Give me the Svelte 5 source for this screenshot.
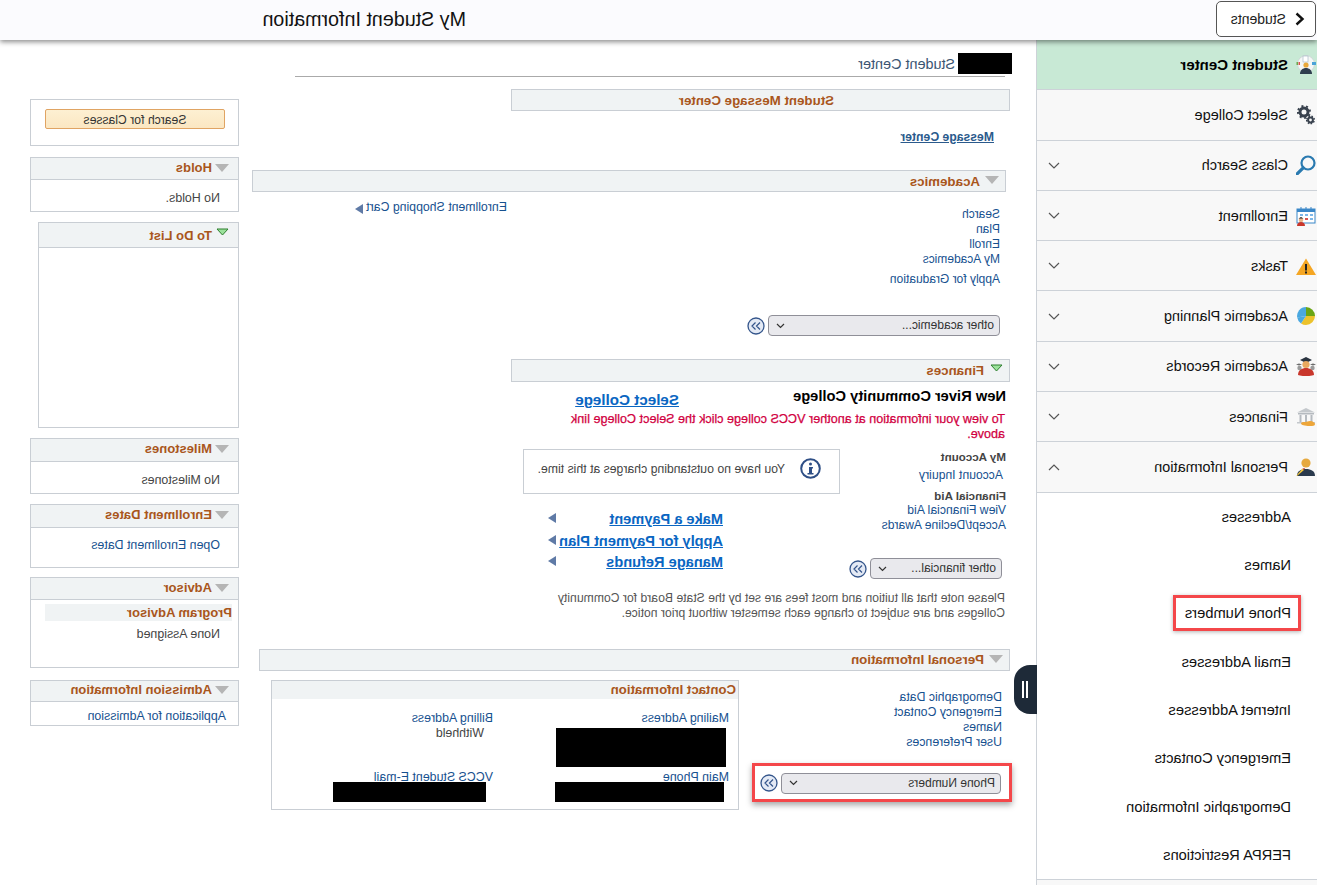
<script>
  const nav = [
    { t: 'Student Center', i: 'center', active: true },
    { t: 'Select College', i: 'gears' },
    { t: 'Class Search', i: 'search', c: 'down' },
    { t: 'Enrollment', i: 'cal', c: 'down' },
    { t: 'Tasks', i: 'warn', c: 'down' },
    { t: 'Academic Planning', i: 'pie', c: 'down' },
    { t: 'Academic Records', i: 'grad', c: 'down' },
    { t: 'Finances', i: 'bank', c: 'down' },
    { t: 'Personal Information', i: 'person', c: 'up' }
  ];
  const sub = ['Addresses', 'Names', 'Phone Numbers', 'Email Addresses', 'Internet Addresses', 'Emergency Contacts', 'Demographic Information', 'FERPA Restrictions'];
</script>

{#snippet tri(kind)}
  <svg class="tri" width="14" height="9" viewBox="0 0 14 9">
    {#if kind === 'green'}
      <path d="M1 1h11L6.500 7z" fill="#9be29b" stroke="#2f7f2f" stroke-width="1" />
    {:else}
      <path d="M0 1h14L7 9z" fill="#b5b5b5" />
    {/if}
  </svg>
{/snippet}

{#snippet arrow()}
  <svg class="arrow" width="8" height="10" viewBox="0 0 8 10"><path d="M0 0l8 5-8 5z" fill="#5f7aa6" /></svg>
{/snippet}

{#snippet go()}
  <svg class="go" width="18" height="18" viewBox="0 0 18 18">
    <circle cx="9" cy="9" r="8" fill="#e4eaf5" stroke="#34558b" stroke-width="1.300" />
    <path d="M5 5.500L8.500 9 5 12.500M9.500 5.500L13 9l-3.500 3.500" fill="none" stroke="#34558b" stroke-width="1.200" />
  </svg>
{/snippet}

{#snippet dropdown(label, w)}
  <div class="pick">
    <div class="select" style="width:{w}px">
      <span>{label}</span>
      <svg width="9" height="6" viewBox="0 0 9 6"><path d="M1 1l3.500 3.500L8 1" fill="none" stroke="#333" stroke-width="1.200" /></svg>
    </div>
    {@render go()}
  </div>
{/snippet}

{#snippet icon(k)}
  <svg class="ico" width="20" height="20" viewBox="0 0 20 20">
    {#if k === 'center'}
      <circle cx="10" cy="9" r="8.500" fill="#f4f7f6" stroke="#cfd8d8" />
      <rect x="8" y="1" width="5" height="6" fill="#fff" stroke="#9fb3c0" stroke-width=".6" />
      <rect x="0" y="7" width="4" height="3" fill="#4aa3d8" />
      <rect x="16" y="7" width="1.500" height="3" fill="#d9534f" />
      <rect x="18" y="7" width="1.500" height="3" fill="#6aa84f" />
      <circle cx="10" cy="10" r="2.600" fill="#e9a93a" />
      <path d="M4 19c0-4 3-6 6-6s6 2 6 6z" fill="#2f3e4e" />
    {:else if k === 'gears'}
      <circle cx="12" cy="7" r="4" fill="none" stroke="#39424e" stroke-width="3" />
      <circle cx="12" cy="7" r="6" fill="none" stroke="#39424e" stroke-width="2" stroke-dasharray="2 2.700" />
      <circle cx="5.500" cy="15" r="2.400" fill="none" stroke="#39424e" stroke-width="2" />
      <circle cx="5.500" cy="15" r="3.800" fill="none" stroke="#39424e" stroke-width="1.500" stroke-dasharray="1.500 1.500" />
    {:else if k === 'search'}
      <circle cx="8" cy="8" r="6.500" fill="none" stroke="#2a7ab0" stroke-width="2.200" />
      <path d="M12.800 12.800L19 19" stroke="#2a7ab0" stroke-width="3.200" stroke-linecap="round" />
    {:else if k === 'cal'}
      <rect x="1" y="3" width="18" height="14" fill="#fff" stroke="#3a87c8" />
      <rect x="1" y="3" width="18" height="3" fill="#3a87c8" />
      <path d="M5 1v4M10 1v4M15 1v4" stroke="#3a87c8" stroke-width="1" />
      <path d="M3 8h3v2H3zM8 8h3v2H8zM13 8h3v2h-3zM3 12h3v2H3z" fill="#7db7e8" />
      <path d="M8 12h3v2H8z" fill="#d9534f" />
      <circle cx="15" cy="14" r="2.300" fill="#e9b48a" />
      <path d="M12.500 12.500h5l-2.500-1.500z" fill="#222" />
      <path d="M11 20c0-3 2-4 4-4s4 1 4 4z" fill="#c9372c" />
    {:else if k === 'warn'}
      <path d="M10 2.500L20 19H0z" fill="#f5a623" />
      <rect x="9" y="8" width="2" height="6.500" fill="#222" />
      <rect x="9" y="15.500" width="2" height="2" fill="#222" />
    {:else if k === 'pie'}
      <path d="M10 10L10 1a9 9 0 0 1 8.800 10.500z" fill="#4aa8e0" />
      <path d="M10 10L10 1a9 9 0 0 0 -9 9z" fill="#6aa515" />
      <path d="M10 10H1a9 9 0 0 0 9 9 9 9 0 0 0 5-1.500z" fill="#ecc22c" />
      <path d="M10 10l8.800 1.500a9 9 0 0 1 -3.800 6z" fill="#4aa8e0" />
    {:else if k === 'grad'}
      <path d="M0 8.500l3-1 3 1-3 1zM14 8.500l3-1 3 1-3 1z" fill="#6b6b6b" />
      <circle cx="3.500" cy="12" r="2.200" fill="#9a9a9a" />
      <circle cx="16.500" cy="12" r="2.200" fill="#9a9a9a" />
      <path d="M4 4l6-3 6 3-6 3z" fill="#2b3440" />
      <circle cx="10" cy="8.500" r="3.600" fill="#e9a95f" />
      <path d="M2 19c0-5 4-7 8-7s8 2 8 7c-3 1.500-13 1.500-16 0z" fill="#c9372c" />
    {:else if k === 'bank'}
      <path d="M10 1l9 4.500H1z" fill="#c4c8cc" />
      <rect x="2" y="6" width="16" height="1.500" fill="#b5babf" />
      <path d="M3.500 8h2v7h-2zM9 8h2v7H9zM14.500 8h2v7h-2z" fill="#b5babf" />
      <rect x="1" y="15" width="18" height="1.500" fill="#c4c8cc" />
      <path d="M4 19c-2 0-3-1-3-2s2-3 5-3c2 0 3 1 5 1s4 0 4 1.500-5 3-11 2.500z" fill="#eda63a" />
    {:else}
      <circle cx="10" cy="6" r="4.600" fill="#e6a93f" />
      <path d="M1 19c0-5 4-7 9-7s9 2 9 7z" fill="#2a3a4d" />
      <path d="M19 19l-7-6 1.500-1.500 6 7z" fill="#f2c63a" />
      <path d="M12 13l-1-2 2.500.5z" fill="#c9372c" />
    {/if}
  </svg>
{/snippet}

<div class="page">
  <header class="top">
    <button class="back">
      <svg width="10" height="14" viewBox="0 0 10 14"><path d="M8.500 1.500L2.500 7l6 5.500" fill="none" stroke="#111" stroke-width="2.400" /></svg>
      <span>Students</span>
    </button>
    <h1>My Student Information</h1>
  </header>

  <div class="body">
    <aside class="side">
      {#each nav as n}
        <div class="row" class:active={n.active}>
          {@render icon(n.i)}
          <span class="lbl">{n.t}</span>
          {#if n.c}
            <svg class="chev" width="12" height="7" viewBox="0 0 12 7">
              <path d={n.c === 'down' ? 'M1 1l5 5 5-5' : 'M1 6l5-5 5 5'} fill="none" stroke="#555" stroke-width="1.200" />
            </svg>
          {/if}
        </div>
      {/each}
      {#each sub as s}
        <div class="subrow"><span class:hl={s === 'Phone Numbers'}>{s}</span></div>
      {/each}
      <div class="sideend"></div>
    </aside>

    <main class="center">
      <div class="title"><span class="redact tb"></span><span>Student Center</span></div>

      <div class="sec msg"><span>Student Message Center</span></div>
      <a class="msgc" href="#m">Message Center</a>

      <div class="sec acad">{@render tri('gray')}<span>Academics</span></div>
      <div class="acadgrid">
        <div class="acadleft">
          <a href="#s">Search</a><a href="#p">Plan</a><a href="#e">Enroll</a><a href="#a">My Academics</a>
          <a class="grad" href="#g">Apply for Graduation</a>
          <div class="pk1">{@render dropdown('other academic...', 232)}</div>
        </div>
        <div class="cart"><a href="#c">Enrollment Shopping Cart</a>{@render arrow()}</div>
      </div>

      <div class="sec fin">{@render tri('green')}<span>Finances</span></div>
      <div class="college"><b>New River Community College</b><a class="big sc" href="#sc">Select College</a></div>
      <p class="warnt">To view your information at another VCCS college click the Select College link above.</p>

      <div class="fingrid">
        <div class="finleft">
          <b class="gh">My Account</b>
          <a class="ai" href="#ai">Account Inquiry</a>
          <b class="gh fa">Financial Aid</b>
          <a class="vf" href="#v">View Financial Aid</a>
          <a href="#d">Accept/Decline Awards</a>
          <div class="pk2">{@render dropdown('other financial...', 132)}</div>
        </div>
        <div class="finright">
          <div class="notice">
            <svg width="21" height="21" viewBox="0 0 21 21">
              <circle cx="10.500" cy="10.500" r="9.300" fill="#fff" stroke="#2f4f86" stroke-width="2" />
              <circle cx="10.500" cy="6" r="1.500" fill="#2f4f86" />
              <path d="M8 9h4v6h1.500v1.500h-6V15H9v-4.500H8z" fill="#2f4f86" />
            </svg>
            <span>You have no outstanding charges at this time.</span>
          </div>
          <div class="paylinks">
            <div class="pay"><a class="big" href="#1">Make a Payment</a>{@render arrow()}</div>
            <div class="pay"><a class="big" href="#2">Apply for Payment Plan</a>{@render arrow()}</div>
            <div class="pay"><a class="big" href="#3">Manage Refunds</a>{@render arrow()}</div>
          </div>
        </div>
      </div>
      <p class="note">Please note that all tuition and most fees are set by the State Board for Community Colleges and are subject to change each semester without prior notice.</p>

      <div class="sec pers">{@render tri('gray')}<span>Personal Information</span></div>
      <div class="persgrid">
        <div class="persleft">
          <a href="#dd">Demographic Data</a><a href="#ec">Emergency Contact</a><a href="#n">Names</a><a href="#u">User Preferences</a>
          <div class="redbox">{@render dropdown('Phone Numbers', 220)}</div>
        </div>
        <div class="contact">
          <div class="chead">Contact Information</div>
          <div class="cgrid">
            <div class="c1">
              <a href="#ma">Mailing Address</a>
              <span class="redact r1"></span>
            </div>
            <div class="c2">
              <a href="#ba">Billing Address</a>
              <span class="wh">Withheld</span>
            </div>
            <div class="c3">
              <a href="#mp">Main Phone</a>
              <span class="redact r2"></span>
            </div>
            <div class="c4">
              <a href="#ve">VCCS Student E-mail</a>
              <span class="redact r3"></span>
            </div>
          </div>
        </div>
      </div>
    </main>

    <aside class="right">
      <div class="panel psearch"><button class="sbtn">Search for Classes</button></div>
      <div class="panel holds">
        <div class="phead h22">{@render tri('gray')}<span>Holds</span></div>
        <div class="ptext">No Holds.</div>
      </div>
      <div class="panel todo">
        <div class="phead h25 tdh">{@render tri('green')}<span>To Do List</span></div>
      </div>
      <div class="panel miles">
        <div class="phead h23">{@render tri('gray')}<span>Milestones</span></div>
        <div class="ptext">No Milestones</div>
      </div>
      <div class="panel dates">
        <div class="phead h23">{@render tri('gray')}<span>Enrollment Dates</span></div>
        <div class="ptext dl"><a href="#o">Open Enrollment Dates</a></div>
      </div>
      <div class="panel advisor">
        <div class="phead h22">{@render tri('gray')}<span>Advisor</span></div>
        <div class="pa">Program Advisor</div>
        <div class="na">None Assigned</div>
      </div>
      <div class="panel adm">
        <div class="phead h21">{@render tri('gray')}<span>Admission Information</span></div>
        <div class="ap"><a href="#af">Application for Admission</a></div>
      </div>
    </aside>
  </div>

  <div class="handle"><i></i><i></i></div>
</div>

<style>
  :global(body) { margin: 0; background: #fff; }
  .page {
    position: relative;
    width: 1317px;
    height: 885px;
    overflow: hidden;
    transform: scaleX(-1);
    font-family: "Liberation Sans", Arial, sans-serif;
    font-size: 12.400px;
    color: #333;
    background: #fff;
  }
  a { color: #17518f; text-decoration: none; }

  .top {
    position: relative;
    z-index: 2;
    height: 40px;
    display: flex;
    align-items: center;
    background: #fbfbfe;
    box-shadow: 0 2px 5px rgba(0, 0, 0, .45);
  }
  .back {
    width: 100px;
    height: 36px;
    margin: 0 0 2px 1px;
    display: flex;
    align-items: center;
    gap: 9px;
    padding: 0 0 0 10px;
    border: 1px solid #555;
    border-radius: 5px;
    background: #fff;
    font: 14px "Liberation Sans", Arial, sans-serif;
    color: #222;
    box-sizing: border-box;
  }
  h1 {
    margin: 0 0 2px 750px;
    font-size: 19.700px;
    font-weight: 400;
    color: #111;
    white-space: nowrap;
  }

  .body { display: flex; align-items: flex-start; height: 845px; }

  .side {
    flex: none;
    width: 281px;
    height: 845px;
    box-sizing: border-box;
    border-right: 1px solid #cdd2d8;
    font-size: 14.500px;
    color: #111;
  }
  .row {
    height: 50.300px;
    box-sizing: border-box;
    display: flex;
    align-items: center;
    padding: 0 11px 0 1px;
    background: #f8f8f8;
    border-bottom: 1px solid #cdd2d8;
  }
  .row.active { background: #c8e9d5; font-weight: 700; font-size: 15px; color: #000; }
  .ico { flex: none; margin-right: 8px; }
  .lbl { flex: 1; }
  .chev { flex: none; }
  .subrow {
    height: 48.300px;
    display: flex;
    align-items: center;
    padding-left: 26px;
    font-size: 14.700px;
    background: #fff;
  }
  .hl {
    margin-left: -10px;
    padding: 7px 9px 7px 7px;
    border: 3px solid #f4474a;
    box-shadow: 0 1px 4px rgba(0, 0, 0, .3);
  }
  .sideend { height: 6px; border-top: 1px solid #cdd2d8; background: #f8f8f8; }

  .center { flex: none; width: 758px; margin-left: 26px; display: flex; flex-direction: column; align-items: flex-start; }
  .title {
    box-sizing: border-box;
    width: 710px;
    height: 24px;
    margin: 13px 0 0 5px;
    display: flex;
    border-bottom: 1px solid #aaa;
    font-size: 14.400px;
    line-height: 23px;
    color: #3b5573;
  }
  .redact { display: block; background: #000; }
  .tb { width: 54px; height: 21px; margin: 0 3px 0 -7px; }

  .sec {
    box-sizing: border-box;
    display: flex;
    align-items: center;
    gap: 5px;
    padding-left: 6px;
    background: #f0f3f4;
    border: 1px solid #c9ced4;
    color: #a9561c;
    font-size: 13.300px;
    font-weight: 700;
  }
  .tri { flex: none; }
  .msg { width: 499px; height: 22px; margin-top: 12px; padding-left: 175px; }
  .msgc { margin: 19px 0 0 16px; font-size: 12.200px; font-weight: 700; line-height: 15px; text-decoration: underline; color: #2b5a8c; }
  .acad { width: 754px; height: 22px; margin: 25px 0 0 4px; }
  .acad .tri { margin-top: -4px; }
  .acadgrid { display: flex; margin-left: 10px; }
  .acadleft { width: 493px; padding-top: 15px; display: flex; flex-direction: column; align-items: flex-start; font-size: 12px; line-height: 15px; }
  .acadleft .grad { margin-top: 5px; }
  .pk1 { margin-top: 28px; }
  .cart { padding-top: 8px; font-size: 12.300px; line-height: 15px; display: flex; align-items: center; gap: 3px; height: 15px; }
  .cart .arrow { margin-top: 3px; }

  .pick { display: flex; align-items: center; gap: 3px; }
  .select {
    box-sizing: border-box;
    height: 21px;
    display: flex;
    align-items: center;
    justify-content: space-between;
    padding: 0 7px 0 5px;
    border: 1px solid #8f8f98;
    border-radius: 4px;
    background: #e9e9ed;
    color: #333;
    font-size: 12px;
  }
  .go { flex: none; }

  .fin { width: 499px; height: 23px; margin-top: 23px; }
  .fin .tri { margin-top: -5px; }
  .college { display: flex; margin: 6px 0 0 4px; font-size: 14.700px; color: #000; line-height: 16px; }
  .college b { width: 327px; }
  .big { color: #0a66c2; font-size: 14.600px; font-weight: 700; text-decoration: underline; line-height: 16px; }
  .college .sc { margin-top: 4px; font-size: 15.200px; }
  .warnt { margin: 4px 0 0 5px; width: 445px; color: #d1003f; font-size: 12.600px; font-weight: 400; line-height: 15px; -webkit-text-stroke: .25px #d1003f; }

  .fingrid { display: flex; margin: 7px 0 0 4px; }
  .finleft { width: 166px; display: flex; flex-direction: column; align-items: flex-start; font-size: 12.200px; line-height: 15px; }
  .gh { color: #444; font-size: 11.600px; }
  .ai { margin: 4px 0 0 3px; }
  .fa { margin-top: 5px; }
  .vf { margin-top: 0; }
  .pk2 { margin: 25px 0 0 4px; }
  .finright { width: 317px; }
  .notice {
    box-sizing: border-box;
    width: 317px;
    height: 45px;
    display: flex;
    align-items: flex-start;
    gap: 15px;
    padding: 8px 0 0 18px;
    border: 1px solid #c9ced4;
    color: #444;
    font-size: 12.250px;
    line-height: 19px;
  }
  .notice span { margin-top: 2px; }
  .paylinks { margin: 17px 0 0 117px; }
  .pay { width: 175px; height: 21.500px; display: flex; justify-content: space-between; }
  .pay .arrow { margin-top: 2px; }
  .note { margin: 12px 0 0 5px; width: 470px; font-size: 12.200px; line-height: 15px; color: #555; }

  .pers { width: 751px; height: 22px; margin-top: 27.500px; }
  .pers .tri { margin-top: -3px; }
  .persgrid { display: flex; }
  .persleft { width: 271px; padding: 19.500px 0 0 8px; box-sizing: border-box; display: flex; flex-direction: column; align-items: flex-start; font-size: 12.300px; line-height: 15px; }
  .redbox {
    box-sizing: border-box;
    width: 260px;
    height: 39px;
    margin: 12.500px 0 0 -10px;
    padding: 7px 0 0 8px;
    border: 3px solid #f4474a;
    box-shadow: 0 3px 6px rgba(0, 0, 0, .35);
    background: #fff;
  }
  .contact {
    box-sizing: border-box;
    width: 468px;
    height: 130px;
    margin-top: 9px;
    border: 1px solid #c9ced4;
  }
  .chead {
    height: 18px;
    padding-left: 2px;
    background: #f0f3f4;
    color: #a9561c;
    font-size: 13.200px;
    font-weight: 700;
    line-height: 17px;
  }
  .cgrid {
    display: grid;
    grid-template-columns: 236px 1fr;
    grid-template-rows: 59px auto;
    padding: 12.500px 0 0 9px;
    line-height: 15px;
  }
  .cgrid a { display: block; }
  .r1 { width: 170px; height: 39px; margin: 1.500px 0 0 3px; }
  .wh { display: block; margin-left: 9px; color: #444; }
  .r2 { width: 169px; height: 20px; margin: -3.500px 0 0 5px; }
  .r3 { width: 153px; height: 20px; margin: -3.500px 0 0 7px; }

  .right { flex: none; width: 209px; margin: 59px 0 0 13px; display: flex; flex-direction: column; align-items: flex-start; }
  .panel {
    box-sizing: border-box;
    width: 209px;
    border: 1px solid #c9ced4;
    background: #fff;
  }
  .psearch { height: 47px; padding: 9px 0 0 13px; }
  .sbtn {
    display: block;
    box-sizing: border-box;
    width: 180px;
    height: 20px;
    padding: 1px 0 0;
    border: 1px solid #e0a463;
    border-radius: 2px;
    background: linear-gradient(#fdf0d2, #fbe7c2);
    color: #333;
    font: 12.200px "Liberation Sans", Arial, sans-serif;
  }
  .phead {
    box-sizing: border-box;
    display: flex;
    align-items: center;
    gap: 3px;
    padding: 0 0 3px 9px;
    background: #f0f3f4;
    border-bottom: 1px solid #c9ced4;
    color: #a9561c;
    font-size: 13px;
    font-weight: 700;
  }
  .tdh { padding-bottom: 0; }
  .tdh .tri { margin-top: -6px; }
  .h21 { height: 21px; }
  .h22 { height: 22px; }
  .h23 { height: 23px; }
  .h25 { height: 25px; }
  .ptext { padding: 11px 0 0 18px; line-height: 15px; color: #444; }
  .holds { height: 55px; margin-top: 11px; }
  .todo { width: 201px; height: 206px; margin-top: 10px; }
  .miles { height: 56px; margin-top: 10px; }
  .dates { height: 64px; margin-top: 10px; }
  .dl { padding-top: 10px; }
  .advisor { height: 91px; margin-top: 9px; }
  .pa {
    width: 187px;
    height: 17px;
    margin: 4px 0 0 6px;
    background: #f0f3f4;
    color: #a9561c;
    font-weight: 700;
    font-size: 13px;
    line-height: 17px;
  }
  .na { padding: 6px 0 0 18px; line-height: 15px; color: #444; }
  .adm { height: 46px; margin-top: 12px; }
  .ap { padding: 7px 0 0 12px; line-height: 15px; }

  .handle {
    position: absolute;
    left: 280px;
    top: 665px;
    width: 23px;
    height: 49px;
    display: flex;
    align-items: center;
    justify-content: center;
    gap: 2px;
    background: #1e2a38;
    border-radius: 0 16px 16px 0;
  }
  .handle i { display: block; width: 2px; height: 17px; background: #fff; }
</style>
